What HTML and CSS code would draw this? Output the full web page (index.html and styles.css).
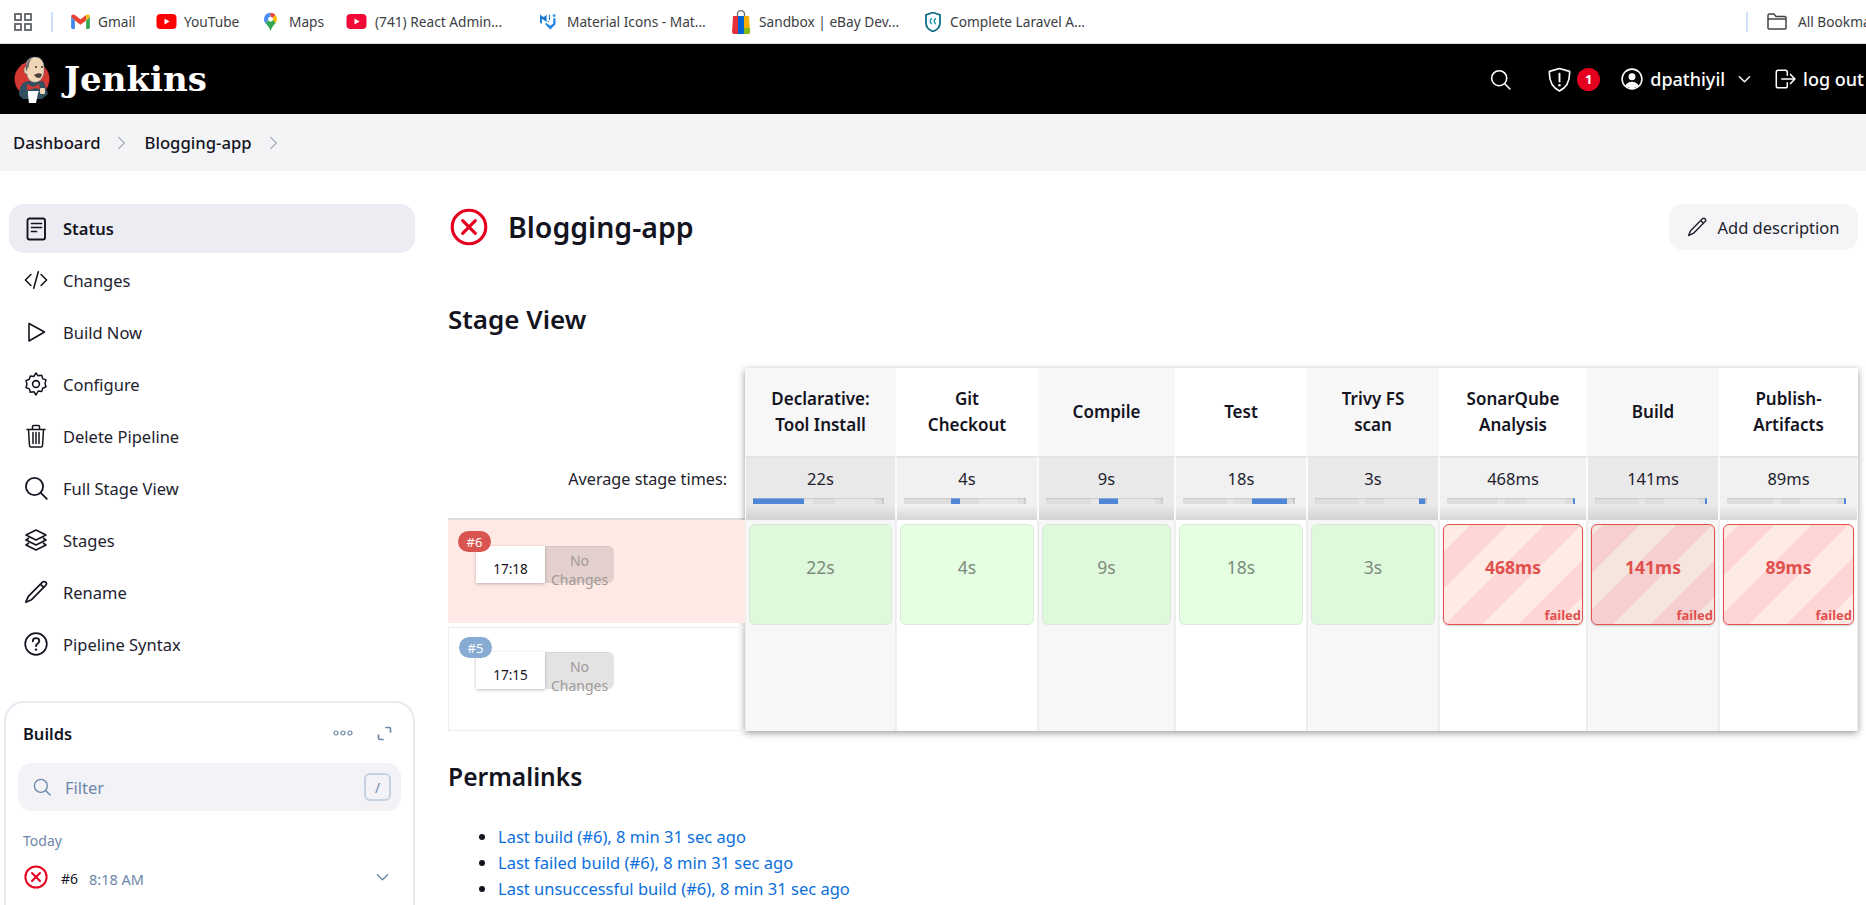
FILE: index.html
```html
<!DOCTYPE html>
<html lang="en">
<head>
<meta charset="utf-8">
<title>Blogging-app - Jenkins</title>
<link rel="stylesheet" href="styles.css">
</head>
<body>
<svg class="sprite" aria-hidden="true">
  <symbol id="chev" viewBox="0 0 12 20"><path d="M2 2l8 8-8 8" fill="none" stroke="currentColor" stroke-width="1.6" stroke-linecap="round" stroke-linejoin="round"/></symbol>
  <symbol id="down" viewBox="0 0 14 9"><path d="M1.5 1.5l5.5 5.5 5.5-5.5" fill="none" stroke="currentColor" stroke-width="1.5" stroke-linecap="round" stroke-linejoin="round"/></symbol>
  <symbol id="search" viewBox="0 0 24 24"><circle cx="10.5" cy="10.5" r="8.6" fill="none" stroke="currentColor" stroke-width="1.8"/><path d="M16.8 16.8l6 6" fill="none" stroke="currentColor" stroke-width="1.8" stroke-linecap="round"/></symbol>
  <symbol id="pencil" viewBox="0 0 24 24"><path d="M18.5 2.2a2.2 2.2 0 0 1 3.2 3.2L7.6 19.7 1.8 22.2l2.5-5.8z M16.6 4.3l3.1 3.1" fill="none" stroke="currentColor" stroke-width="1.7" stroke-linejoin="round"/></symbol>
  <symbol id="fail" viewBox="0 0 24 24"><circle cx="12" cy="12" r="10.6" fill="none" stroke="#e6001f" stroke-width="2"/><path d="M8 8l8 8M16 8l-8 8" fill="none" stroke="#e6001f" stroke-width="2" stroke-linecap="round"/></symbol>
</svg>

<div class="bookmarks">
  <svg class="bm-apps" viewBox="0 0 18 18"><g fill="none" stroke="#5f6368" stroke-width="1.8"><rect x="1" y="1" width="6" height="6"/><rect x="11" y="1" width="6" height="6"/><rect x="1" y="11" width="6" height="6"/><rect x="11" y="11" width="6" height="6"/></g></svg>
  <span class="bm-sep"></span>
  <a class="bm bm-gmail"><svg class="bm-ico" viewBox="0 0 20 16"><path d="M0 3v11.500q0 1.500 1.500 1.500H4V7z" fill="#4285f4"/><path d="M20 3v11.500q0 1.500-1.500 1.500H16V7z" fill="#34a853"/><path d="M0 3l4 4 6 4.500L16 7V1l-6 4.500L4 1 2.500.5Q0 0 0 3z" fill="#ea4335"/><path d="M16 1v6l4-4q0-3-2.500-2.500z" fill="#fbbc04"/></svg>Gmail</a>
  <a class="bm bm-yt"><svg class="bm-ico" viewBox="0 0 20 15"><rect width="20" height="15" rx="4" fill="#f00"/><path d="M8 4.500l5 3-5 3z" fill="#fff"/></svg>YouTube</a>
  <a class="bm bm-maps"><svg class="bm-ico bm-pin" viewBox="0 0 14 20"><path d="M7 0a7 7 0 0 0-5.400 11.400L7 5z" fill="#4285f4" opacity=".95"/><path d="M7 0a7 7 0 0 1 5.400 2.500L7 8z" fill="#ea4335"/><path d="M12.400 2.500A7 7 0 0 1 12.500 11L7 8z" fill="#fbbc04"/><path d="M1.600 11.400L7 5l5.500 6C10 14 8 16 7 20c-1-4-3-6-5.400-8.600z" fill="#34a853"/><circle cx="7" cy="7" r="2.600" fill="#fff"/></svg>Maps</a>
  <a class="bm bm-react"><svg class="bm-ico" viewBox="0 0 20 15"><rect width="20" height="15" rx="4" fill="#f00a35"/><path d="M8 4.500l5 3-5 3z" fill="#fff"/></svg>(741) React Admin...</a>
  <a class="bm bm-mi"><svg class="bm-ico" viewBox="0 0 17 18"><path d="M0 1l4 3 3-3v8L4 7 2 5.500V11L0 9.500zM7.500 9l3-2v-6l-1 0 0 8z" fill="#1976d2"/><path d="M11 13l3-2.500V5h2.500v6.500L11 17l-5-5v-2.500z" fill="#1e88e5"/><circle cx="15" cy="2" r="1.600" fill="#42a5f5"/></svg>Material Icons - Mat...</a>
  <a class="bm bm-bag"><svg class="bm-ico" viewBox="0 0 18 24"><path d="M5.500 7V4a3.500 3.500 0 0 1 7 0v3" fill="none" stroke="#777" stroke-width="1.400"/><path d="M1 6h5v18H2q-2 0-2-2z" fill="#e53238"/><rect x="6" y="6" width="6" height="18" fill="#0064d2"/><path d="M12 6h5l1 16q0 2-2 2h-4z" fill="#f5af02"/><path d="M12 18h6v4q0 2-2 2h-4z" fill="#86b817"/></svg>Sandbox | eBay Dev...</a>
  <a class="bm bm-lar"><svg class="bm-ico" viewBox="0 0 16 20"><path d="M8 .5l7 2.500v8c0 4-3 7-7 8.500-4-1.500-7-4.500-7-8.500V3z" fill="#fff" stroke="#0e6f87" stroke-width="1.800"/><path d="M7 6.500a3 3 0 0 0 0 5.500M11 6.500a3 3 0 0 0 0 5.500" fill="none" stroke="#2196b8" stroke-width="1.500"/></svg>Complete Laravel A...</a>
  <span class="bm-fill"></span>
  <span class="bm-sep"></span>
  <a class="bm bm-all"><svg class="bm-ico bm-folder" viewBox="0 0 20 17"><path d="M1 15V2.500Q1 1 2.500 1H7l2 2.500h8.500Q19 3.500 19 5v10q0 1-1 1H2q-1 0-1-1zM1 6h18" fill="none" stroke="#444" stroke-width="1.500"/></svg>All Bookmarks</a>
</div>

<header class="topbar">
  <a class="brand">
    <svg class="logo" viewBox="0 0 36 48">
      <circle cx="18" cy="24" r="17.500" fill="#d33833"/>
      <path d="M5 40c0-9 4-13 9-14l6 1 9-1c2 3 3 6 3 8l2 5-6 5H9z" fill="#335061"/>
      <path d="M12 10c0-5 4-8 9-8 6 0 9 5 9 10 0 3 0 7-1 9-2 5-6 7-10 6-4-1-6-5-6-8-2 0-3-2-3-4s1-3 2-3z" fill="#f0d6b7" stroke="#49728b" stroke-width=".4"/>
      <path d="M12 16c-1-7 2-13 8-14-4 2-5 6-5 9l-1 2c-1 1-1 2-1 3z" fill="#6d6b6d"/>
      <path d="M20 20c3-2 6-2 8-1l-1 3c-2 2-5 1-7-2z" fill="#49443f"/>
      <circle cx="22" cy="12" r=".9" fill="#1a1a1a"/><circle cx="28" cy="12" r=".9" fill="#1a1a1a"/>
      <path d="M13 29l6 3 6-3 1 5-6-1-1 1-6 1z" fill="#d33833"/>
      <path d="M14 36h11l-1 2-2 10H15l-1-8z" fill="#fff"/>
      <rect x="26" y="33" width="5" height="6" rx="1" fill="#f0d6b7"/>
    </svg>
    <span class="brand-name">Jenkins</span>
  </a>
  <span class="topbar-fill"></span>
  <svg class="tb-search"><use href="#search"/></svg>
  <svg class="tb-shield" viewBox="0 0 24 26"><path d="M12 1.500L22.500 4.500c.5 9-2 16.500-10.500 20.500C3.500 21 1 13.500 1.500 4.500z" fill="none" stroke="#fff" stroke-width="1.700" stroke-linejoin="round"/><path d="M12 7v8" stroke="#fff" stroke-width="2" stroke-linecap="round"/><circle cx="12" cy="19" r="1.300" fill="#fff"/></svg>
  <span class="tb-badge">1</span>
  <svg class="tb-user" viewBox="0 0 24 24"><circle cx="12" cy="12" r="10.800" fill="none" stroke="#fff" stroke-width="1.700"/><circle cx="12" cy="9.500" r="3.800" fill="#fff"/><path d="M4.800 19.200c1.600-3 4-4.200 7.200-4.200s5.600 1.200 7.200 4.200c-4 3.800-10.400 3.800-14.400 0z" fill="#fff"/></svg>
  <span class="tb-name">dpathiyil</span>
  <svg class="tb-down"><use href="#down"/></svg>
  <svg class="tb-out" viewBox="0 0 24 24"><path d="M14.500 8V4.500Q14.500 2.500 12.500 2.500H4.500Q2.500 2.500 2.500 4.500v15q0 2 2 2h8q2 0 2-2V16M8.500 12h14M18 7l4.800 5-4.800 5" fill="none" stroke="#fff" stroke-width="1.700" stroke-linecap="round" stroke-linejoin="round"/></svg>
  <span class="tb-logout">log out</span>
</header>

<nav class="crumbs">
  <a class="crumb">Dashboard</a>
  <svg class="crumb-chev"><use href="#chev"/></svg>
  <a class="crumb">Blogging-app</a>
  <svg class="crumb-chev"><use href="#chev"/></svg>
</nav>

<div class="layout">
  <aside class="side">
    <ul class="menu">
      <li class="menu-item active"><svg class="mi" viewBox="0 0 24 24"><rect x="3.500" y="1.500" width="17.500" height="21" rx="2" fill="none" stroke="currentColor" stroke-width="1.900"/><path d="M7.500 6.500h10M7.500 10.500h10M7.500 14.500h5" stroke="currentColor" stroke-width="1.700" stroke-linecap="round"/></svg>Status</li>
      <li class="menu-item"><svg class="mi" viewBox="0 0 26 24"><path d="M7.500 6L1.500 12l6 6M18.500 6l6 6-6 6M15.500 3l-5 18" fill="none" stroke="currentColor" stroke-width="1.700" stroke-linecap="round" stroke-linejoin="round"/></svg>Changes</li>
      <li class="menu-item"><svg class="mi" viewBox="0 0 24 24"><path d="M5 3.500v17.500L20.500 12z" fill="none" stroke="currentColor" stroke-width="1.600" stroke-linejoin="round"/></svg>Build Now</li>
      <li class="menu-item"><svg class="mi" viewBox="0 0 24 24"><path d="M12 1l2.200 2.800 3.500-.6 1 3.400 3.300 1.400-1 3.400 1 3.400-3.300 1.400-1 3.400-3.500-.6L12 23l-2.200-3.300-3.500.6-1-3.400L2 15.500l1-3.400-1-3.400 3.300-1.400 1-3.400 3.500.6z" fill="none" stroke="currentColor" stroke-width="1.500" stroke-linejoin="round"/><circle cx="12" cy="12" r="3.400" fill="none" stroke="currentColor" stroke-width="1.600"/></svg>Configure</li>
      <li class="menu-item"><svg class="mi" viewBox="0 0 24 24"><path d="M3 5.500h18M8.500 5V2.500q0-1 1-1h5q1 0 1 1V5M4.500 6l1 15.500q.1 1.500 1.500 1.500h10q1.400 0 1.500-1.500l1-15.500M9 8.500v11M12 8.500v11M15 8.500v11" fill="none" stroke="currentColor" stroke-width="1.500" stroke-linecap="round"/></svg>Delete Pipeline</li>
      <li class="menu-item"><svg class="mi"><use href="#search"/></svg>Full Stage View</li>
      <li class="menu-item"><svg class="mi" viewBox="0 0 24 24"><path d="M12 2l10 5-10 5L2 7zM5 10l-3 2 10 5 10-5-3-2M5 15l-3 2 10 5 10-5-3-2" fill="none" stroke="currentColor" stroke-width="1.600" stroke-linejoin="round"/></svg>Stages</li>
      <li class="menu-item"><svg class="mi"><use href="#pencil"/></svg>Rename</li>
      <li class="menu-item"><svg class="mi" viewBox="0 0 24 24"><circle cx="12" cy="12" r="10.800" fill="none" stroke="currentColor" stroke-width="1.700"/><path d="M8.800 9.300c0-2 1.500-3.200 3.300-3.200s3.200 1.200 3.200 2.900c0 2.600-3.300 2.500-3.300 5.200" fill="none" stroke="currentColor" stroke-width="1.800" stroke-linecap="round"/><circle cx="12" cy="17.600" r="1.200" fill="currentColor"/></svg>Pipeline Syntax</li>
    </ul>

    <section class="builds">
      <div class="builds-head">
        <span class="builds-title">Builds</span>
        <svg class="builds-more" viewBox="0 0 20 6"><g fill="none" stroke="#6d87a9" stroke-width="1.200"><circle cx="3" cy="3" r="2"/><circle cx="10" cy="3" r="2"/><circle cx="17" cy="3" r="2"/></g></svg>
        <svg class="builds-exp" viewBox="0 0 15 15"><path d="M9 1.500h3q1.500 0 1.500 1.500v3M6 13.500H3Q1.500 13.500 1.500 12V9" fill="none" stroke="#6d87a9" stroke-width="1.700" stroke-linecap="round"/></svg>
      </div>
      <div class="filter">
        <svg class="filter-ico"><use href="#search"/></svg>
        <span class="filter-text">Filter</span>
        <kbd class="filter-key">/</kbd>
      </div>
      <div class="builds-day">Today</div>
      <div class="build-row">
        <svg class="build-ico"><use href="#fail"/></svg>
        <span class="build-no">#6</span>
        <span class="build-time">8:18 AM</span>
        <svg class="build-down"><use href="#down"/></svg>
      </div>
    </section>
  </aside>

  <main class="main">
    <div class="title-row">
      <svg class="title-ico"><use href="#fail"/></svg>
      <h1 class="title">Blogging-app</h1>
      <button class="add-desc"><svg class="add-ico"><use href="#pencil"/></svg>Add description</button>
    </div>

    <h2 class="h-stage">Stage View</h2>

    <div class="stage">
      <div class="stage-left">
        <div class="avg-label">Average stage times:</div>
        <div class="run run-fail">
          <span class="run-badge red">#6</span>
          <div class="run-card"><span class="run-time">17:18</span><span class="run-changes">No Changes</span></div>
        </div>
        <div class="run run-ok">
          <span class="run-badge blue">#5</span>
          <div class="run-card"><span class="run-time">17:15</span><span class="run-changes">No Changes</span></div>
        </div>
      </div>

      <div class="stage-grid">
        <div class="th odd">Declarative:<br>Tool Install</div>
        <div class="th">Git<br>Checkout</div>
        <div class="th odd">Compile</div>
        <div class="th">Test</div>
        <div class="th odd">Trivy FS<br>scan</div>
        <div class="th">SonarQube<br>Analysis</div>
        <div class="th odd">Build</div>
        <div class="th">Publish-<br>Artifacts</div>

        <div class="av odd"><span>22s</span><div class="bar"><i class="on" style="flex-basis:38.8%"></i><i style="flex-basis:7%"></i><i style="flex-basis:15.9%"></i><i style="flex-basis:31.7%"></i><i style="flex-basis:5.3%"></i><i style="flex-basis:1.3%"></i></div></div>
        <div class="av"><span>4s</span><div class="bar"><i style="flex-basis:38.8%"></i><i class="on" style="flex-basis:7%"></i><i style="flex-basis:15.9%"></i><i style="flex-basis:31.7%"></i><i style="flex-basis:5.3%"></i><i style="flex-basis:1.3%"></i></div></div>
        <div class="av odd"><span>9s</span><div class="bar"><i style="flex-basis:38.8%"></i><i style="flex-basis:7%"></i><i class="on" style="flex-basis:15.9%"></i><i style="flex-basis:31.7%"></i><i style="flex-basis:5.3%"></i><i style="flex-basis:1.3%"></i></div></div>
        <div class="av"><span>18s</span><div class="bar"><i style="flex-basis:38.8%"></i><i style="flex-basis:7%"></i><i style="flex-basis:15.9%"></i><i class="on" style="flex-basis:31.7%"></i><i style="flex-basis:5.3%"></i><i style="flex-basis:1.3%"></i></div></div>
        <div class="av odd"><span>3s</span><div class="bar"><i style="flex-basis:38.8%"></i><i style="flex-basis:7%"></i><i style="flex-basis:15.9%"></i><i style="flex-basis:31.7%"></i><i class="on" style="flex-basis:5.3%"></i><i style="flex-basis:1.3%"></i></div></div>
        <div class="av"><span>468ms</span><div class="bar"><i style="flex-basis:38.8%"></i><i style="flex-basis:7%"></i><i style="flex-basis:15.9%"></i><i style="flex-basis:31.7%"></i><i style="flex-basis:5.3%"></i><i class="on" style="flex-basis:1.3%"></i></div></div>
        <div class="av odd"><span>141ms</span><div class="bar"><i style="flex-basis:38.8%"></i><i style="flex-basis:7%"></i><i style="flex-basis:15.9%"></i><i style="flex-basis:31.7%"></i><i style="flex-basis:5.3%"></i><i class="on" style="flex-basis:1.3%"></i></div></div>
        <div class="av"><span>89ms</span><div class="bar"><i style="flex-basis:38.8%"></i><i style="flex-basis:7%"></i><i style="flex-basis:15.9%"></i><i style="flex-basis:31.7%"></i><i style="flex-basis:5.3%"></i><i class="on" style="flex-basis:1.3%"></i></div></div>

        <div class="td odd"><div class="box ok">22s</div></div>
        <div class="td"><div class="box ok">4s</div></div>
        <div class="td odd"><div class="box ok">9s</div></div>
        <div class="td"><div class="box ok">18s</div></div>
        <div class="td odd"><div class="box ok">3s</div></div>
        <div class="td"><div class="box bad bad-a">468ms<small>failed</small></div></div>
        <div class="td odd"><div class="box bad bad-b">141ms<small>failed</small></div></div>
        <div class="td"><div class="box bad bad-c">89ms<small>failed</small></div></div>

        <div class="td odd"></div><div class="td"></div><div class="td odd"></div><div class="td"></div><div class="td odd"></div><div class="td"></div><div class="td odd"></div><div class="td"></div>
      </div>
    </div>

    <h2 class="h-perma">Permalinks</h2>
    <ul class="perma">
      <li><a>Last build (#6), 8 min 31 sec ago</a></li>
      <li><a>Last failed build (#6), 8 min 31 sec ago</a></li>
      <li><a>Last unsuccessful build (#6), 8 min 31 sec ago</a></li>
    </ul>
  </main>
</div>
</body>
</html>
```

FILE: styles.css
```css
* { box-sizing: border-box; }
html, body { margin: 0; height: 100vh; overflow: hidden; }
body { font-family: "Noto Sans", "Open Sans", sans-serif; font-size: 16.5px; color: #14141f; background: #fff; }
.sprite { display: none; }
ul { list-style: none; margin: 0; padding: 0; }

/* bookmarks */
.bookmarks { height: 44px; display: flex; align-items: center; border-bottom: 1px solid #dcdcdc; padding-left: 14px; overflow: hidden; background: #fff; font-size: 13.7px; color: #3c4043; white-space: nowrap; }
.bm-apps { width: 18px; height: 18px; flex: none; margin-right: 19px; }
.bm-sep { width: 2px; height: 20px; background: #cfe0f8; flex: none; }
.bm { display: flex; align-items: center; gap: 8px; flex: none; }
.bm-ico { width: 19px; height: 15px; flex: none; }
.bm-pin { height: 20px; width: 13px; }
.bm-gmail { margin-left: 18px; width: 85px; }
.bm-yt { width: 108px; gap: 7px; }
.bm-yt .bm-ico { width: 21px; }
.bm-maps { width: 82px; gap: 12px; }
.bm-maps .bm-ico { width: 13px; height: 20px; }
.bm-react { width: 194px; }
.bm-react .bm-ico { width: 21px; }
.bm-mi { width: 192px; gap: 11px; }
.bm-mi .bm-ico { width: 16px; height: 18px; }
.bm-bag { width: 193px; gap: 9px; }
.bm-bag .bm-ico { width: 18px; height: 24px; }
.bm-lar { gap: 9px; }
.bm-lar .bm-ico { width: 16px; height: 20px; }
.bm-fill { flex: 1; }
.bm-all { margin-left: 19px; gap: 11px; width: 99px; overflow: hidden; }
.bm-folder { width: 20px; height: 17px; }

/* header */
.topbar { height: 70px; background: #000; color: #fff; display: flex; align-items: center; padding-left: 14px; overflow: hidden; }
.brand { display: flex; align-items: center; gap: 14px; flex: none; }
.logo { width: 36px; height: 48px; flex: none; }
.brand-name { font-family: "DejaVu Serif", "Liberation Serif", serif; font-weight: 700; font-size: 34px; }
.topbar-fill { flex: 1; }
.tb-search { width: 21px; height: 21px; flex: none; }
.tb-shield { width: 23px; height: 25px; margin-left: 37px; flex: none; }
.tb-badge { width: 23px; height: 23px; border-radius: 50%; background: #e6001f; margin-left: 6px; font-size: 13px; font-weight: 700; display: flex; align-items: center; justify-content: center; flex: none; }
.tb-user { width: 22px; height: 22px; margin-left: 21px; flex: none; }
.tb-name { margin-left: 7px; font-size: 18px; font-weight: 500; flex: none; }
.tb-down { width: 13px; height: 9px; margin-left: 13px; flex: none; color: #fff; }
.tb-out { width: 22px; height: 22px; margin-left: 23px; flex: none; }
.tb-logout { margin-left: 7px; margin-right: 2px; font-size: 18px; font-weight: 500; flex: none; }

/* breadcrumb */
.crumbs { height: 57px; background: #f4f4f7; display: flex; align-items: center; padding-left: 13px; }
.crumb { font-size: 16.7px; font-weight: 500; }
.crumb-chev { width: 9px; height: 14px; color: #9aa9bd; margin: 0 18px 0 17px; flex: none; }

/* layout */
.layout { display: flex; }
.side { width: 448px; flex: none; padding: 33px 0 0 4px; }
.menu { margin-bottom: 31px; }
.menu-item { height: 52px; margin-left: 5px; width: 406px; display: flex; align-items: center; gap: 15px; padding-left: 15px; color: #22222e; }
.menu-item.active { height: 49px; margin-bottom: 1px; background: #ecedf3; border-radius: 15px; font-weight: 600; color: #14141f; }
.mi { width: 24px; height: 24px; flex: none; color: #14141f; }

.builds { width: 411px; height: 300px; border: 2px solid #e9eaf1; border-radius: 20px; padding: 0 12px; }
.builds-head { height: 60px; display: flex; align-items: center; padding-left: 5px; }
.builds-title { font-weight: 600; flex: 1; }
.builds-more { width: 20px; height: 6px; margin-right: 24px; }
.builds-exp { width: 15px; height: 15px; margin-right: 9px; }
.filter { height: 48px; background: #f2f2f7; border-radius: 14px; display: flex; align-items: center; padding: 0 10px 0 15px; color: #6d87a9; }
.filter-ico { width: 18px; height: 18px; flex: none; }
.filter-text { margin-left: 14px; flex: 1; }
.filter-key { width: 27px; height: 28px; border: 2px solid #c6d2e1; border-radius: 6px; display: flex; align-items: center; justify-content: center; font-size: 14px; font-family: inherit; }
.builds-day { margin: 20px 0 0 5px; font-size: 14px; color: #6d87a9; line-height: 20px; }
.build-row { display: flex; align-items: center; margin-top: 14px; padding-left: 6px; height: 24px; }
.build-ico { width: 24px; height: 24px; flex: none; }
.build-no { margin-left: 13px; font-size: 14px; padding-top: 3px; }
.build-time { margin-left: 11px; font-size: 14.5px; color: #6d87a9; flex: 1; padding-top: 3px; }
.build-down { width: 13px; height: 9px; margin-right: 12px; color: #6d87a9; }

/* main */
.main { flex: 1; min-width: 0; padding-right: 8px; }
.title-row { display: flex; align-items: center; height: 46px; margin-top: 33px; }
.title-ico { width: 38px; height: 38px; margin-left: 2px; flex: none; }
.title { font-size: 28.5px; font-weight: 600; margin: 0 0 0 20px; flex: 1; }
.add-desc { height: 46px; width: 189px; border: 0; border-radius: 14px; background: #f5f5f8; display: flex; align-items: center; justify-content: center; gap: 10px; font: inherit; color: #22222e; padding: 0; }
.add-ico { width: 20px; height: 20px; flex: none; color: #22222e; }
.h-stage { font-size: 26px; font-weight: 600; margin: 52px 0 0; height: 34px; line-height: 34px; }

.stage { display: flex; margin-top: 32px; }
.stage-left { width: 297px; flex: none; padding-top: 88px; }
.avg-label { height: 64px; text-align: right; padding: 12px 18px 0 0; line-height: 22px; font-size: 16.2px; border-bottom: 2px solid #dcdcdc; color: #22222e; }
.run { position: relative; height: 103px; border: 1px solid #eee; border-right: 0; }
.run-fail { background: #ffe9e4; border: 0; }
.run-ok { height: 104px; margin-top: 4px; }
.run-badge { position: absolute; left: 10px; top: 11px; width: 33px; height: 21px; border-radius: 11px; color: #fff; font-size: 13px; display: flex; align-items: center; justify-content: center; z-index: 1; }
.run-ok .run-badge { top: 9px; }
.run-badge.red { background: #d9534f; }
.run-badge.blue { background: #87abd2; }
.run-card { position: absolute; left: 28px; top: 26px; display: flex; height: 37px; }
.run-ok .run-card { top: 24px; left: 27px; }
.run-time { width: 69px; background: #fff; box-shadow: 0 1px 3px rgba(0,0,0,.25); font-size: 13.5px; text-align: center; padding-top: 12px; line-height: 22px; }
.run-changes { width: 69px; background: rgba(0,0,0,.11); border-top: 1px solid rgba(0,0,0,.06); border-radius: 0 6px 6px 0; color: #a09a98; font-size: 14px; line-height: 19px; text-align: center; padding: 4px 2px 0; height: 37px; }

.stage-grid { display: grid; grid-template-columns: 151px 142px 137px 132px 132px 148px 132px 139px; grid-template-rows: 88px 64px 108px 103px; box-shadow: 0 2px 7px rgba(0,0,0,.4); background: #fff; }
.th { display: flex; align-items: center; justify-content: center; text-align: center; font-weight: 600; line-height: 26px; font-size: 17px; background: #fff; }
.th.odd { background: #f7f7f7; }
.av { text-align: center; background: linear-gradient(#f1f1f1 0, #f1f1f1 76%, #d6d6d6 100%); border: solid #fafafa; border-width: 0 1px; padding-top: 10px; line-height: 22px; color: #22222e; border-top: 2px solid #e4e4e4; }
.av.odd { background: linear-gradient(#e9e9e9 0, #e9e9e9 76%, #d2d2d2 100%); }
.bar { display: flex; height: 6px; margin: 8px 11px 0 7px; background: #e2e2e2; }
.bar i { display: block; min-width: 2px; flex-grow: 0; flex-shrink: 1; background: #dedede; box-shadow: inset 0 1px 1px rgba(0,0,0,.1); }
.bar i:nth-child(even) { background: #e6e6e6; }
.bar i:last-child { background: #cfcfcf; }
.bar i.on, .bar i.on:nth-child(even), .bar i.on:last-child { background: #4f86d6; box-shadow: inset 0 1px 0 rgba(255,255,255,.3); }
.td { background: #fff; border: solid #f0f0f0; border-width: 0 1px; padding: 4px 3px 3px; }
.td.odd { background: #f7f7f7; border-color: #ececec; }
.box { position: relative; height: 101px; border-radius: 6px; padding-top: 30px; text-align: center; line-height: 24px; font-size: 17.5px; }
.box.ok { background: #e5ffe3; border: 1px solid #d9e8d7; color: #7d8a7c; }
.odd .box.ok { background: #def8dc; }
.box.bad { border: 1.5px solid #e3514e; color: #e0504d; font-weight: 700; box-shadow: 0 1px 2px rgba(0,0,0,.2); }
.bad-a { background: repeating-linear-gradient(135deg, #ffebe6 -7px, #ffebe6 19px, #ffd6d6 19px, #ffd6d6 45px); }
.bad-b { background: repeating-linear-gradient(135deg, #f6e4df -18.5px, #f6e4df 7.5px, #f6d0d0 7.5px, #f6d0d0 33.5px); }
.bad-c { background: repeating-linear-gradient(135deg, #ffebe6 -16px, #ffebe6 10px, #ffd6d6 10px, #ffd6d6 36px); }
.box small { position: absolute; right: 1px; bottom: 0; font-size: 13px; line-height: 18px; font-weight: 700; }

.h-perma { font-size: 24.6px; font-weight: 600; margin: 29px 0 0; line-height: 34px; }
.perma { list-style: disc; margin-top: 30px; padding-left: 50px; line-height: 26px; }
.perma a { color: #0b6fdc; }
```
